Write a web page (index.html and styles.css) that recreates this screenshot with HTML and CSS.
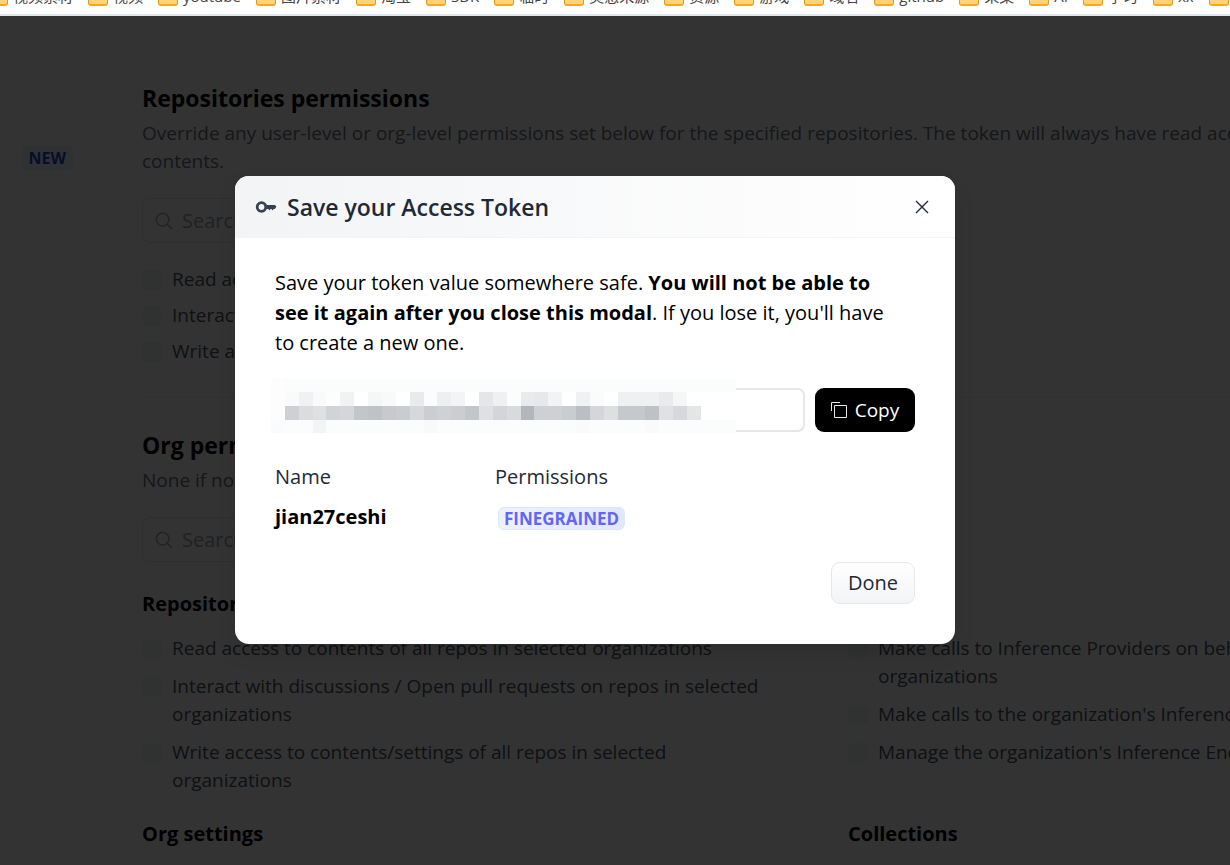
FILE: index.html
```html
<!DOCTYPE html>
<html lang="en">
<head>
<meta charset="utf-8">
<title>Access Tokens</title>
<link rel="stylesheet" href="styles.css">
</head>
<body>
<nav class="bookmarks" aria-label="Bookmarks">
  <a class="bookmark" href="#"><span class="folder"></span>视频素材</a>
  <a class="bookmark" href="#"><span class="folder"></span>视频</a>
  <a class="bookmark" href="#"><span class="folder"></span>youtube</a>
  <a class="bookmark" href="#"><span class="folder"></span>图片素材</a>
  <a class="bookmark" href="#"><span class="folder"></span>淘宝</a>
  <a class="bookmark" href="#"><span class="folder"></span>SDK</a>
  <a class="bookmark" href="#"><span class="folder"></span>临时</a>
  <a class="bookmark" href="#"><span class="folder"></span>灵感来源</a>
  <a class="bookmark" href="#"><span class="folder"></span>资源</a>
  <a class="bookmark" href="#"><span class="folder"></span>游戏</a>
  <a class="bookmark" href="#"><span class="folder"></span>域名</a>
  <a class="bookmark" href="#"><span class="folder"></span>github</a>
  <a class="bookmark" href="#"><span class="folder"></span>采集</a>
  <a class="bookmark" href="#"><span class="folder"></span>AI</a>
  <a class="bookmark" href="#"><span class="folder"></span>学习</a>
  <a class="bookmark" href="#"><span class="folder"></span>xx</a>
  <a class="bookmark" href="#"><span class="folder"></span></a>
</nav>
<div class="viewport">
  <div class="page">
    <aside class="sidebar"><span class="new-badge">NEW</span></aside>
    <main class="content">
      <section class="section">
        <h2 class="title">Repositories permissions</h2>
        <p class="hint">Override any user-level or org-level permissions set below for the specified repositories. The token will always have read access to all public repos contents.</p>
        <label class="search">
          <svg class="search-icon" viewBox="0 0 20 20" aria-hidden="true"><circle cx="8.5" cy="8.5" r="7"/><path d="M13.6 13.6 19 19"/></svg>
          <input class="search-input" type="text" placeholder="Search for repos" aria-label="Search for repos">
        </label>
        <div class="checks checks-tight">
          <label class="check"><input class="box" type="checkbox">Read access</label>
          <label class="check"><input class="box" type="checkbox">Interact</label>
          <label class="check"><input class="box" type="checkbox">Write access</label>
        </div>
      </section>
      <hr class="rule">
      <section class="section">
        <h2 class="title">Org permissions</h2>
        <p class="hint">None if not set</p>
        <label class="search">
          <svg class="search-icon" viewBox="0 0 20 20" aria-hidden="true"><circle cx="8.5" cy="8.5" r="7"/><path d="M13.6 13.6 19 19"/></svg>
          <input class="search-input" type="text" placeholder="Search for orgs" aria-label="Search for orgs">
        </label>
        <div class="groups">
          <div>
            <h3 class="subtitle">Repositories</h3>
            <div class="checks">
              <label class="check"><input class="box" type="checkbox">Read access to contents of all repos in selected organizations</label>
              <label class="check"><input class="box" type="checkbox">Interact with discussions / Open pull requests on repos in selected organizations</label>
              <label class="check"><input class="box" type="checkbox">Write access to contents/settings of all repos in selected organizations</label>
            </div>
          </div>
          <div>
            <h3 class="subtitle">Inference</h3>
            <div class="checks">
              <label class="check"><input class="box" type="checkbox">Make calls to Inference Providers on behalf of the selected organizations</label>
              <label class="check"><input class="box" type="checkbox">Make calls to the organization's Inference Endpoints</label>
              <label class="check"><input class="box" type="checkbox">Manage the organization's Inference Endpoints</label>
            </div>
          </div>
          <h3 class="subtitle">Org settings</h3>
          <h3 class="subtitle">Collections</h3>
        </div>
      </section>
    </main>
  </div>
  <div class="overlay">
    <div class="modal" role="dialog" aria-labelledby="modal-title">
      <header class="modal-head">
        <svg class="key-icon" viewBox="0 0 22 14" aria-hidden="true"><circle cx="6.5" cy="7" r="4.3"/><path class="key-blade" d="M10.5 5.1H20L21.4 6.8 19.8 8.9H18.6L17.6 10.4 16.5 8.9H15.5L14.4 10.4 13.3 8.9H10.5Z"/></svg>
        <h1 class="modal-title" id="modal-title">Save your Access Token</h1>
        <button class="close" type="button" aria-label="Close"><svg class="close-icon" viewBox="0 0 14 14" aria-hidden="true"><path d="M1 1 13 13M13 1 1 13"/></svg></button>
      </header>
      <div class="modal-body">
        <p class="message">Save your token value somewhere safe. <strong class="strong">You will not be able to see it again after you close this modal</strong>. If you lose it, you'll have to create a new one.</p>
        <div class="token-row">
          <div class="token">
            <input class="token-input" type="text" readonly aria-label="Access token">
            <svg class="mosaic" viewBox="0 0 465 55" shape-rendering="crispEdges" aria-hidden="true">
              <rect width="465" height="55" fill="#fbfdfc"/>
              <rect y="14" width="465" height="28" fill="#fff"/>
              <g>
                <rect x="0" y="0" width="14" height="42" fill="#fdfdfd"/>
                <rect x="14" y="14" width="14" height="14" fill="#fafafa"/>
                <rect x="28" y="14" width="14" height="14" fill="#f0f1f3"/>
                <rect x="42" y="14" width="13" height="14" fill="#fbfafa"/>
                <rect x="55" y="14" width="14" height="14" fill="#fefdfd"/>
                <rect x="69" y="14" width="14" height="14" fill="#f1f3f2"/>
                <rect x="97" y="14" width="14" height="14" fill="#f5f7f6"/>
                <rect x="111" y="14" width="14" height="14" fill="#f8f9f8"/>
                <rect x="139" y="14" width="14" height="14" fill="#e9eaec"/>
                <rect x="153" y="14" width="13" height="14" fill="#fcfcfc"/>
                <rect x="166" y="14" width="14" height="14" fill="#eeeff1"/>
                <rect x="180" y="14" width="14" height="14" fill="#f3f4f6"/>
                <rect x="208" y="14" width="14" height="14" fill="#e5e6e8"/>
                <rect x="222" y="14" width="14" height="14" fill="#eff0f2"/>
                <rect x="236" y="14" width="14" height="14" fill="#fcfcfc"/>
                <rect x="250" y="14" width="13" height="14" fill="#e9eaeb"/>
                <rect x="263" y="14" width="14" height="14" fill="#e7e8ea"/>
                <rect x="277" y="14" width="14" height="14" fill="#f2f3f5"/>
                <rect x="305" y="14" width="14" height="14" fill="#f0f1f3"/>
                <rect x="319" y="14" width="14" height="14" fill="#fbfbfb"/>
                <rect x="347" y="14" width="14" height="14" fill="#eff0f1"/>
                <rect x="361" y="14" width="13" height="14" fill="#f1f0f0"/>
                <rect x="374" y="14" width="14" height="14" fill="#eff0f1"/>
                <rect x="388" y="14" width="14" height="14" fill="#e9eaec"/>
                <rect x="402" y="14" width="14" height="14" fill="#f6f6f6"/>
              </g>
              <g>
                <rect x="14" y="28" width="14" height="14" fill="#cfd0d4"/>
                <rect x="28" y="28" width="14" height="14" fill="#dbdcdd"/>
                <rect x="42" y="28" width="13" height="14" fill="#dfe0e1"/>
                <rect x="55" y="28" width="14" height="14" fill="#d0d4d7"/>
                <rect x="69" y="28" width="14" height="14" fill="#d5d6da"/>
                <rect x="83" y="28" width="14" height="14" fill="#c2c5ca"/>
                <rect x="97" y="28" width="14" height="14" fill="#bfc3c8"/>
                <rect x="111" y="28" width="14" height="14" fill="#c8c9cd"/>
                <rect x="125" y="28" width="14" height="14" fill="#cacdd0"/>
                <rect x="139" y="28" width="14" height="14" fill="#d7d8dc"/>
                <rect x="153" y="28" width="13" height="14" fill="#cccdd1"/>
                <rect x="166" y="28" width="14" height="14" fill="#ced2d4"/>
                <rect x="180" y="28" width="14" height="14" fill="#cccdd1"/>
                <rect x="194" y="28" width="14" height="14" fill="#c2c5ca"/>
                <rect x="208" y="28" width="14" height="14" fill="#dfe0e4"/>
                <rect x="222" y="28" width="14" height="14" fill="#d4d5d9"/>
                <rect x="236" y="28" width="14" height="14" fill="#d9dadb"/>
                <rect x="250" y="28" width="13" height="14" fill="#b3b6bb"/>
                <rect x="263" y="28" width="14" height="14" fill="#ced1d4"/>
                <rect x="277" y="28" width="14" height="14" fill="#cfd0d4"/>
                <rect x="291" y="28" width="14" height="14" fill="#cacdd0"/>
                <rect x="305" y="28" width="14" height="14" fill="#bbbfc4"/>
                <rect x="319" y="28" width="14" height="14" fill="#d5d6da"/>
                <rect x="333" y="28" width="14" height="14" fill="#dedfe0"/>
                <rect x="347" y="28" width="27" height="14" fill="#c5c8cd"/>
                <rect x="374" y="28" width="14" height="14" fill="#bec2c7"/>
                <rect x="388" y="28" width="14" height="14" fill="#e0e1e2"/>
                <rect x="402" y="28" width="14" height="14" fill="#d7d8dc"/>
                <rect x="416" y="28" width="14" height="14" fill="#e4e5e6"/>
              </g>
              <g>
                <rect x="0" y="42" width="14" height="13" fill="#fafbfd"/>
                <rect x="42" y="42" width="13" height="13" fill="#f3f4f6"/>
                <rect x="153" y="42" width="13" height="13" fill="#faf9f9"/>
                <rect x="305" y="42" width="14" height="13" fill="#fafafa"/>
                <rect x="374" y="42" width="14" height="13" fill="#fafafa"/>
              </g>
            </svg>
          </div>
          <button class="copy" type="button"><svg class="copy-icon" viewBox="0 0 16 16" aria-hidden="true"><path d="M3.5 3.5H15.5V15.5H3.5ZM.5 9V.5H9"/></svg>Copy</button>
        </div>
        <dl class="details">
          <div class="detail"><dt class="term">Name</dt><dd class="value">jian27ceshi</dd></div>
          <div class="detail"><dt class="term">Permissions</dt><dd class="value"><span class="grade">FINEGRAINED</span></dd></div>
        </dl>
        <button class="done" type="button">Done</button>
      </div>
    </div>
  </div>
</div>
</body>
</html>
```
FILE: styles.css
```css
* {
  box-sizing: border-box;
}

body {
  margin: 0;
  height: 100vh;
  display: flex;
  flex-direction: column;
  overflow: hidden;
  background: #fff;
  color: #000;
  font-family: "Open Sans", "Noto Sans", "Noto Sans CJK SC", sans-serif;
  font-size: 20px;
  line-height: 30px;
}

h1, h2, h3, p, dl, dd {
  margin: 0;
}

button, input {
  font: inherit;
}

/* Bookmarks strip, scrolled so that only its lower edge shows */
.bookmarks {
  flex: none;
  display: flex;
  align-items: flex-end;
  gap: 15px;
  height: 16px;
  margin-left: -12px;
  padding-bottom: 8px;
  overflow: hidden;
  border-bottom: 2px solid #dfe6ec;
}

.bookmark {
  flex: none;
  display: flex;
  align-items: flex-end;
  gap: 5px;
  color: #444;
  font-size: 15px;
  line-height: 20px;
  text-decoration: none;
}

.folder {
  width: 20px;
  height: 16px;
  border: 1px solid #e8971a;
  border-bottom: 2px solid #fca622;
  border-radius: 3px;
  background: #ffd477;
}

.viewport {
  flex: 1;
  min-height: 0;
  position: relative;
  overflow: hidden;
}

.page {
  display: flex;
  align-items: flex-start;
}

.sidebar {
  flex: none;
  display: flex;
  align-items: flex-end;
  justify-content: flex-end;
  width: 92px;
  height: 220px;
  padding: 0 18px 65px 0;
  border: 1px solid #f6f7f8;
  border-width: 0 1px 1px 0;
  border-radius: 0 0 12px 0;
  background: #fcfcfc;
}

.new-badge {
  padding: 0 6px;
  border: 1px solid #eaf2ff;
  border-radius: 5px;
  background: #eff6ff;
  color: #1d4ed8;
  font-size: 16px;
  font-weight: 700;
  line-height: 22px;
}

.content {
  flex: none;
  width: 1352px;
  margin-left: 50px;
  padding-top: 67px;
}

.title {
  font-size: 23px;
  font-weight: 700;
  line-height: 30px;
}

.hint {
  margin-top: 6px;
  color: #6b7280;
  font-size: 19px;
  line-height: 28px;
}

.search {
  display: flex;
  align-items: center;
  gap: 9px;
  max-width: 646px;
  height: 45px;
  margin-top: 23px;
  padding: 0 13px 0 12px;
  border: 1px solid #e5e7eb;
  border-radius: 8px;
}

.search-icon {
  width: 18px;
  height: 18px;
  fill: none;
  stroke: #9ca3af;
  stroke-width: 1.5;
}

.search-input {
  flex: 1;
  min-width: 0;
  padding: 0;
  border: 0;
  outline: 0;
  background: none;
}

.search-input::placeholder {
  color: #9ca3af;
}

.checks {
  display: grid;
  gap: 10px;
  margin-top: 16px;
}

.checks-tight {
  gap: 8px;
  margin-top: 22px;
}

.check {
  display: flex;
  align-items: flex-start;
  gap: 10px;
  color: #4b5563;
  font-size: 19px;
  line-height: 28px;
}

.box {
  flex: none;
  appearance: none;
  width: 20px;
  height: 20px;
  margin: 5px 0 0;
  border-radius: 5px;
  background: #f0f6f5;
}

.rule {
  height: 1px;
  margin: 32px 0;
  border: 0;
  background: #f0f1f3;
}

.groups {
  display: grid;
  grid-template-columns: 1fr 1fr;
  gap: 26px 60px;
  margin-top: 28px;
}

.subtitle {
  font-size: 20px;
  font-weight: 700;
  line-height: 28px;
}

/* Dimmed layer and dialog */
.overlay {
  position: absolute;
  inset: 0;
  display: flex;
  align-items: flex-start;
  justify-content: center;
  padding: 160px 40px 0 0;
  background: rgba(0, 0, 0, 0.8);
}

.modal {
  width: 100%;
  max-width: 720px;
  overflow: hidden;
  border-radius: 14px;
  background: #fff;
  box-shadow: 0 10px 20px rgba(0, 0, 0, 0.1);
}

.modal-head {
  display: flex;
  align-items: center;
  gap: 10px;
  padding: 16px 20px 15px;
  border-bottom: 1px solid #f3f4f6;
  background: linear-gradient(to right, #f3f4f6, #fff);
  color: #1f2937;
}

.key-icon {
  width: 22px;
  height: 14px;
  fill: none;
  stroke: #374151;
  stroke-width: 2.8;
}

.key-blade {
  fill: #374151;
  stroke: none;
}

.modal-title {
  flex: 1;
  font-size: 23px;
  font-weight: 600;
  line-height: 30px;
}

.close {
  display: flex;
  padding: 6px;
  border: 0;
  background: none;
}

.close-icon {
  width: 14px;
  height: 14px;
  fill: none;
  stroke: #1f2937;
  stroke-width: 1.4;
}

.modal-body {
  display: flex;
  flex-direction: column;
  gap: 30px;
  padding: 30px 40px 40px;
}

.message {
  max-width: 624px;
}

.strong {
  font-weight: 700;
}

.token-row {
  display: flex;
  gap: 10px;
}

.token {
  flex: 1;
  position: relative;
  display: flex;
}

.token-input {
  width: 100%;
  height: 44px;
  padding: 0 12px;
  border: 2px solid #e5e7eb;
  border-radius: 7px;
  background: #fff;
}

.mosaic {
  position: absolute;
  top: -10px;
  left: -4px;
  width: 465px;
  height: 55px;
}

.copy {
  display: flex;
  align-items: center;
  justify-content: center;
  gap: 8px;
  width: 100px;
  padding: 0;
  border: 0;
  border-radius: 9px;
  background: #000;
  color: #fff;
  font-size: 19px;
}

.copy-icon {
  width: 16px;
  height: 16px;
  fill: none;
  stroke: #e5e7eb;
  stroke-width: 1;
}

.details {
  display: grid;
  grid-template-columns: 220px 1fr;
}

.detail {
  display: grid;
  gap: 10px;
}

.term {
  color: #1f2937;
}

.value {
  display: flex;
  align-items: center;
  font-weight: 700;
}

.grade {
  margin-left: 3px;
  padding: 0 5px;
  border: 1px solid #dfe5ff;
  border-radius: 6px;
  background: linear-gradient(to right, #eef2ff, #e0e7ff);
  color: #6366f1;
  font-size: 17px;
  font-weight: 700;
  line-height: 21px;
}

.done {
  align-self: flex-end;
  height: 42px;
  padding: 0 16px;
  border: 1px solid #e5e7eb;
  border-radius: 9px;
  background: linear-gradient(#fff, #f3f4f6);
  color: #1f2937;
}
```
